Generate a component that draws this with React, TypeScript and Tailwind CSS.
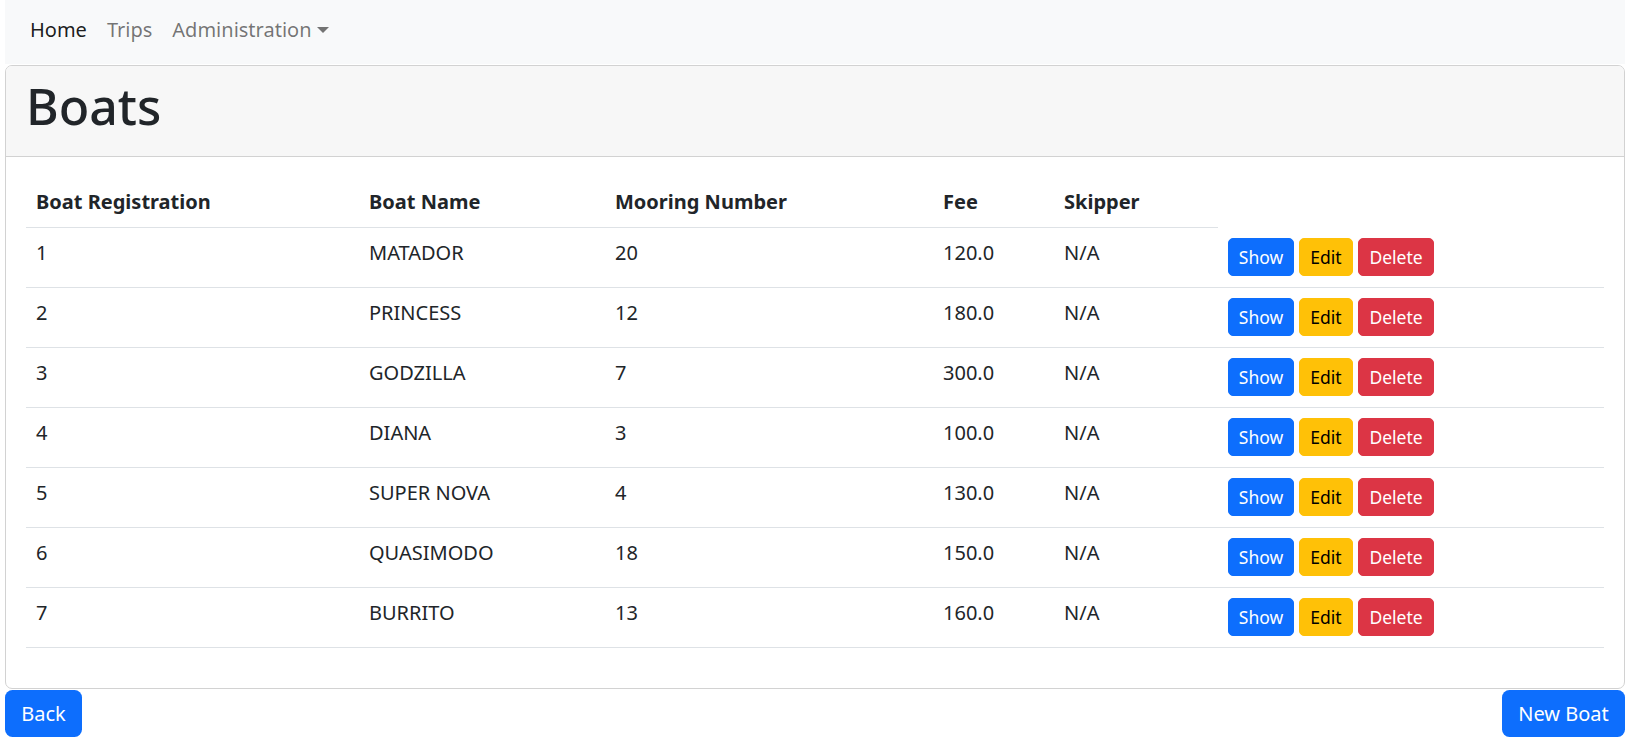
import { useState } from "react";

// Boats index page, Bootstrap-ish look at 125% scale
const boats = [
  { id: 1, name: "MATADOR", mooring: 20, fee: 120.0, skipper: "N/A" },
  { id: 2, name: "PRINCESS", mooring: 12, fee: 180.0, skipper: "N/A" },
  { id: 3, name: "GODZILLA", mooring: 7, fee: 300.0, skipper: "N/A" },
  { id: 4, name: "DIANA", mooring: 3, fee: 100.0, skipper: "N/A" },
  { id: 5, name: "SUPER NOVA", mooring: 4, fee: 130.0, skipper: "N/A" },
  { id: 6, name: "QUASIMODO", mooring: 18, fee: 150.0, skipper: "N/A" },
  { id: 7, name: "BURRITO", mooring: 13, fee: 160.0, skipper: "N/A" },
];

const NavBar = () => {
  const [active] = useState("Home");
  return (
    <nav className="h-[64px] bg-[#f8f9fa] flex items-center pb-[4px] px-[15px] text-[20px] leading-[30px]">
      {["Home", "Trips"].map((l) => (
        <a
          key={l}
          className={`px-[10px] ${active === l ? "text-black/90" : "text-black/55"}`}
        >
          {l}
        </a>
      ))}
      <a className="px-[10px] text-black/55 flex items-center">
        Administration
        <span className="ml-[5px] w-0 h-0 border-t-[6px] border-t-[#737373] border-x-[6px] border-x-transparent" />
      </a>
    </nav>
  );
};

const SmallBtn = ({ label, cls }: { label: string; cls: string }) => (
  <button className={`h-[38px] rounded-[5px] border text-[17.5px] leading-[26px] flex items-center justify-center ${cls}`}>
    {label}
  </button>
);

export default function App() {
  return (
    <div className="w-[1625px] pl-[5px] font-['Noto_Sans',sans-serif] text-[#212529] text-[20px] leading-[30px]">
      <NavBar />

      {/* card */}
      <div className="mt-[1px] border border-[#d2d2d2] rounded-[7px] bg-white overflow-hidden">
        <div className="bg-[#f7f7f7] border-b border-[#d2d2d2] px-[20px] pt-[10px] pb-[20px]">
          <h1 className="text-[50px] leading-[60px] font-medium">Boats</h1>
        </div>

        <div className="p-[20px]">
          <div className="grid grid-cols-[333px_246px_328px_121px_164px] w-[1192px] h-[51px] items-start pt-[10px] border-b border-[#dee2e6] font-bold">
            <div className="px-[10px]">Boat Registration</div>
            <div className="px-[10px]">Boat Name</div>
            <div className="px-[10px]">Mooring Number</div>
            <div className="px-[10px]">Fee</div>
            <div className="px-[10px]">Skipper</div>
          </div>

          {boats.map((b) => (
            <div
              key={b.id}
              className="grid grid-cols-[333px_246px_328px_121px_164px_1fr] h-[60px] items-start pt-[10px] border-b border-[#dee2e6]"
            >
              <div className="px-[10px]">{b.id}</div>
              <div className="px-[10px]">{b.name}</div>
              <div className="px-[10px]">{b.mooring}</div>
              <div className="px-[10px]">{b.fee.toFixed(1)}</div>
              <div className="px-[10px]">{b.skipper}</div>
              <div className="px-[10px] flex gap-[5px]">
                <SmallBtn label="Show" cls="w-[66px] bg-[#0d6efd] border-[#0d6efd] text-white" />
                <SmallBtn label="Edit" cls="w-[54px] bg-[#ffc107] border-[#ffc107] text-black" />
                <SmallBtn label="Delete" cls="w-[76px] bg-[#dc3545] border-[#dc3545] text-white" />
              </div>
            </div>
          ))}
          <div className="h-[20px]" />
        </div>
      </div>

      <div className="flex justify-between mt-[1px]">
        <button className="w-[77px] h-[47px] rounded-[7.5px] bg-[#0d6efd] text-white flex items-center justify-center">
          Back
        </button>
        <button className="w-[123px] h-[47px] rounded-[7.5px] bg-[#0d6efd] text-white flex items-center justify-center">
          New Boat
        </button>
      </div>
    </div>
  );
}
